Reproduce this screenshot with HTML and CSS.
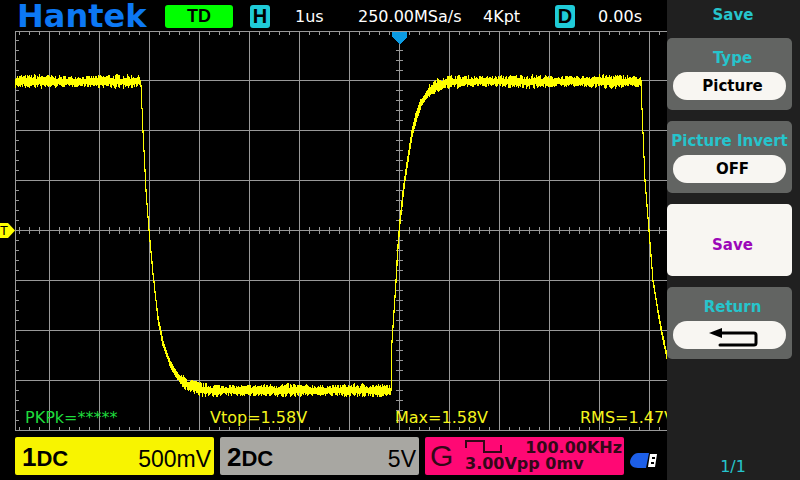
FILE: index.html
```html
<!DOCTYPE html>
<html lang="en">
<head>
    <meta charset="UTF-8">
    <meta name="viewport" content="width=device-width, initial-scale=1.0">
    <title>Hantek</title>
    <link rel="stylesheet" href="styles.css">
</head>
<body>
    <main class="scope">
        <header class="topbar">
            <h1 class="logo">Hantek</h1>
            <span class="status">TD</span>
            <span class="badge">H</span>
            <span>1us</span>
            <span>250.00MSa/s</span>
            <span>4Kpt</span>
            <span class="badge">D</span>
            <span>0.00s</span>
        </header>

        <section class="screen">
            <span class="trigger-level">T</span>
            <svg class="plot" viewBox="0 0 652 400">
                <path id="grid" fill="#999"/>
                <path id="trace" fill="#ffff00"/>
                <path fill="#0c9ce4" d="M377 1h15v5l-7 7h-1l-7-7z"/>
            </svg>
            <div class="measures">
                <span class="off">PKPk=*****</span>
                <span>Vtop=1.58V</span>
                <span>Max=1.58V</span>
                <span>RMS=1.47V</span>
            </div>
        </section>

        <footer class="channels">
            <div class="channel ch1">
                <span class="name"><b>1</b>DC</span>
                <span class="scale">500mV</span>
            </div>
            <div class="channel ch2">
                <span class="name"><b>2</b>DC</span>
                <span class="scale">5V</span>
            </div>
            <div class="channel gen">
                <span class="gen-name">G</span>
                <div class="gen-info">
                    <div class="gen-row">
                        <svg width="37" height="14" viewBox="0 0 37 14">
                            <path d="M1 8V1h18v11h17V5" fill="none" stroke="#330818" stroke-width="2"/>
                        </svg>
                        <span>100.00KHz</span>
                    </div>
                    <div>3.00Vpp 0mv</div>
                </div>
            </div>
            <svg class="usb" width="27" height="18" viewBox="0 0 27 18">
                <path d="M8 1h11l-3 15H8C3 16 0 13 0 10c0-4 4-9 8-9z" fill="#1d5fe8"/>
                <path d="M20 2h7l-2 13h-7z" fill="#fff"/>
                <path d="M22 5h3v2h-3zM21 10h3v2h-3z" fill="#000"/>
            </svg>
        </footer>
    </main>

    <aside class="menu">
        <h2 class="menu-title">Save</h2>
        <button class="item">
            <span class="label">Type</span>
            <span class="value">Picture</span>
        </button>
        <button class="item">
            <span class="label">Picture Invert</span>
            <span class="value">OFF</span>
        </button>
        <button class="item active">
            <span class="label">Save</span>
        </button>
        <button class="item">
            <span class="label">Return</span>
            <span class="value">
                <svg width="50" height="24" viewBox="0 0 50 24">
                    <path d="M12 10h34q2 0 2 2v8q0 2-2 2H12" fill="none" stroke="#000" stroke-width="3" stroke-linecap="round"/>
                    <path d="M1 10l13-5v10z"/>
                </svg>
            </span>
        </button>
        <span class="page">1/1</span>
    </aside>

    <script src="script.js"></script>
</body>
</html>
```

FILE: styles.css
```css
* {
    box-sizing: border-box;
}
body {
    margin: 0;
    min-height: 100vh;
    display: flex;
    background: #000;
    color: #fff;
    font: 16px/20px "DejaVu Sans", sans-serif;
}
.scope {
    flex: 1;
    min-width: 0;
    overflow: hidden;
}

/* top bar */
.topbar {
    display: grid;
    grid-template-columns: 148px 85px 45px 63px 125px 72px 43px 1fr;
    align-items: center;
    height: 31px;
    padding: 2px 0 0 17px;
}
.logo {
    align-self: start;
    margin: 0;
    color: #0c78f4;
    font-size: 32px;
    line-height: 28px;
}
.status,
.badge {
    height: 23px;
    border-radius: 3px;
    color: #000;
    font: bold 18px/23px "Liberation Sans", sans-serif;
    text-align: center;
}
.status {
    width: 68px;
    background: #00ff00;
}
.badge {
    width: 20px;
    background: #1fcbd8;
    font-size: 20px;
}

/* waveform */
.screen {
    position: relative;
    padding-left: 15px;
}
.plot {
    display: block;
    width: 100%;
    shape-rendering: crispEdges;
}
.trigger-level {
    position: absolute;
    left: 0;
    top: 50%;
    width: 15px;
    height: 15px;
    margin-top: -8px;
    padding-right: 8px;
    background: #ffff00;
    clip-path: polygon(0 0, 8px 0, 100% 50%, 8px 100%, 0 100%);
    color: #000;
    font: 13px/15px "Liberation Sans", sans-serif;
    text-align: center;
}
.measures {
    position: absolute;
    left: 25px;
    bottom: 3px;
    display: grid;
    grid-template-columns: repeat(4, 185px);
    color: #f4f41c;
}
.measures .off {
    color: #1fdc3c;
}

/* channel boxes */
.channels {
    display: grid;
    grid-template-columns: repeat(3, 1fr) 27px;
    align-items: end;
    gap: 6px;
    padding: 6px 10px 5px 15px;
}
.channel {
    display: flex;
    align-items: center;
    justify-content: space-between;
    height: 38px;
    border-radius: 2px;
    color: #000;
}
.ch1 {
    background: #f8f400;
}
.ch2 {
    background: #a8a7a2;
}
.name {
    padding: 3px 0 0 7px;
    font: bold 22px/32px "Liberation Sans", sans-serif;
}
.name b {
    font-size: 26px;
}
.scale {
    padding: 6px 3px 0 0;
    font: 23px/28px "Liberation Sans", sans-serif;
}
.gen {
    padding: 0 2px 0 5px;
    background: #ff0874;
    color: #330818;
}
.gen-name {
    font: 30px/38px "Liberation Sans", sans-serif;
}
.gen-info {
    width: 157px;
    font-weight: bold;
    line-height: 16px;
}
.gen-row {
    display: flex;
    justify-content: space-between;
}
.usb {
    margin-bottom: 5px;
}

/* side menu */
.menu {
    display: flex;
    flex-direction: column;
    gap: 11px;
    width: 133px;
    padding: 5px 8px 3px 0;
    background: #202020;
    color: #26c4cc;
}
.menu-title {
    margin: 0 0 2px;
    padding-left: 7px;
    font-size: 15px;
    line-height: 20px;
    text-align: center;
}
.item {
    display: flex;
    flex-direction: column;
    align-items: center;
    gap: 4px;
    height: 72px;
    padding: 10px 6px;
    border: none;
    border-radius: 5px;
    background: #626462;
    color: #26c4cc;
    font: bold 15px/20px "DejaVu Sans", sans-serif;
    white-space: nowrap;
    cursor: pointer;
}
.item .label {
    padding-left: 6px;
}
.item:nth-of-type(2) .label {
    padding-left: 0;
}
.value {
    display: flex;
    align-items: center;
    justify-content: center;
    width: 100%;
    height: 28px;
    padding-left: 6px;
    border-radius: 14px;
    background: #f8f6f2;
    color: #000;
}
.item.active {
    padding-top: 31px;
    background: #f8f6f2;
    color: #9c08b8;
}
.page {
    margin-top: auto;
    padding-left: 7px;
    text-align: center;
}
```

FILE: script.js
```js
const rect = (x, y, w, h) => `M${x} ${y}h${w}v${h}h${-w}z`;

// graticule: 50px divisions, ticks every 10px
function drawGrid() {
    let d = rect(0, 0, 1, 400) + rect(0, 0, 652, 1) + rect(0, 399, 652, 1);
    for (let x = 34; x < 652; x += 50) d += rect(x, 0, 1, 400);
    for (let y = 49; y < 399; y += 50) d += rect(0, y, 652, 1);
    for (let x = 4; x < 652; x += 10) {
        if (x % 50 === 34) continue;
        d += rect(x, 1, 1, 3) + rect(x, 196, 1, 7) + rect(x, 396, 1, 3);
    }
    for (let y = 9; y < 399; y += 10) {
        if (y % 50 === 49) continue;
        d += rect(1, y, 3, 1) + rect(381, y, 7, 1);
    }
    document.getElementById('grid').setAttribute('d', d);
}

const points = [
    [0, 50], [125, 50], [126, 54], [128, 100], [131, 159], [134, 199],
    [138, 242], [143, 287], [148, 312], [155, 332], [160, 341], [166, 349],
    [175, 355], [190, 359], [376, 359], [377, 310], [380, 265], [383, 215],
    [385, 190], [389, 154], [393, 127], [397, 102], [401, 86], [406, 72],
    [414, 60], [422, 54], [432, 51], [445, 50], [626, 50], [627, 78],
    [630, 149], [634, 199], [638, 249], [643, 280], [647, 302], [652, 325]
];

function level(x) {
    const i = Math.max(1, points.findIndex(p => p[0] >= x));
    const [x0, y0] = points[i - 1];
    const [x1, y1] = points[i];
    return y0 + (y1 - y0) * (x - x0) / (x1 - x0);
}

let seed = 7;
function random() {
    seed = (seed * 16807) % 2147483647;
    return seed / 2147483647;
}

function drawTrace() {
    let d = '';
    for (let x = 0; x < 652; x++) {
        const a = level(x);
        const b = level(x + 1);
        const slope = Math.abs(b - a);
        const rising = x > 380 && x < 440;
        const base = slope < 2 ? 2 : slope < 6 ? (rising ? 3 : 1) : (rising ? 2 : 0);
        // noise swells and fades along the flat parts
        const noise = slope < 1 ? 4 + Math.sin(x / 13) : 1;
        const top = Math.round(Math.min(a, b) - base - random() * noise);
        const bottom = Math.round(Math.max(a, b) + base + 1 + random() * noise);
        d += rect(x, top, 1, bottom - top);
    }
    document.getElementById('trace').setAttribute('d', d);
}

drawGrid();
drawTrace();
```
